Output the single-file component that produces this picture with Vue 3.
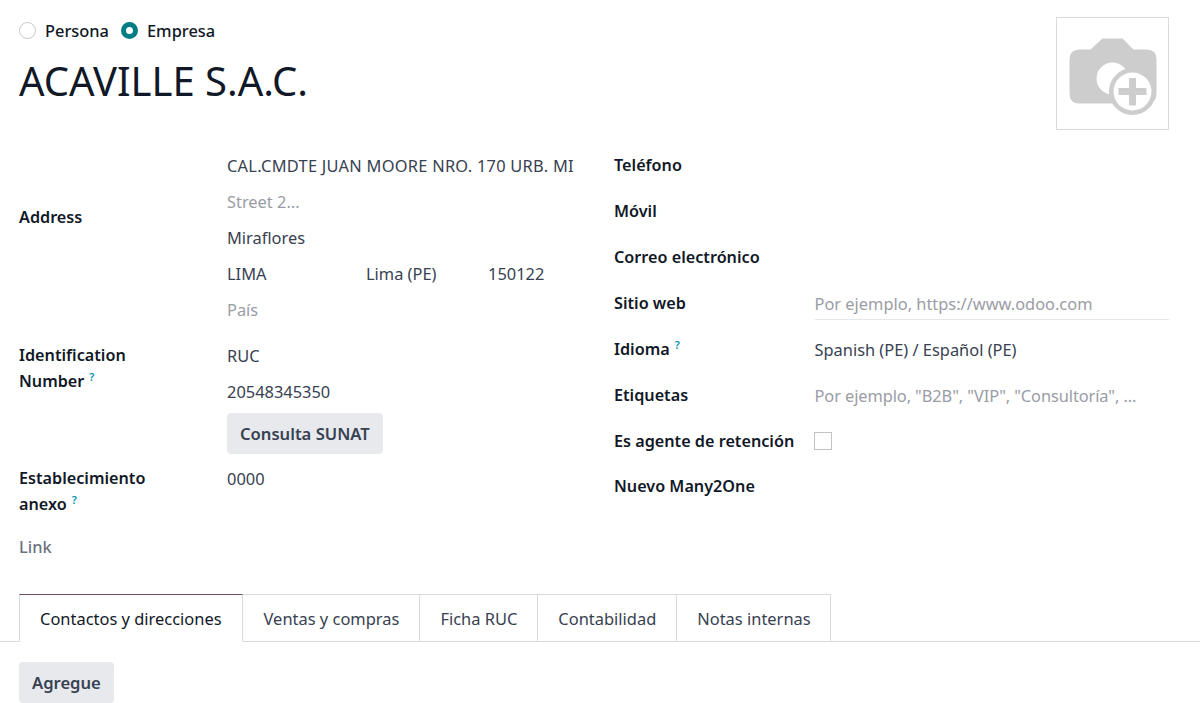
<script setup>
const tabs = ['Contactos y direcciones', 'Ventas y compras', 'Ficha RUC', 'Contabilidad', 'Notas internas']
const rightRows = [
  { label: 'Teléfono' },
  { label: 'Móvil' },
  { label: 'Correo electrónico' },
  { label: 'Sitio web', placeholder: 'Por ejemplo, https://www.odoo.com', underline: true },
  { label: 'Idioma', help: true, value: 'Spanish (PE) / Español (PE)' },
  { label: 'Etiquetas', placeholder: 'Por ejemplo, "B2B", "VIP", "Consultoría", ...', tight: true },
  { label: 'Es agente de retención', check: true },
  { label: 'Nuevo Many2One' },
]
</script>

<template>
  <div class="page">
    <header class="head">
      <div class="head-left">
        <div class="radios">
          <label class="radio"><span class="dot"></span>Persona</label>
          <label class="radio"><span class="dot on"></span>Empresa</label>
        </div>
        <h1 class="title">ACAVILLE S.A.C.</h1>
      </div>
      <div class="avatar">
        <svg class="cam" width="88" height="80" viewBox="0 0 88 80">
          <path fill="#cdcdcd" d="M10.500 13.500H21.500L33.500 2.500H53.500L64.500 13.500H77.500Q87.500 13.500 87.500 23.500V57.500Q87.500 67.500 77.500 67.500H10.500Q.5 67.500 .5 57.500V23.500Q.5 13.500 10.500 13.500Z"/>
          <circle cx="43.500" cy="42.500" r="16" fill="#fff"/>
          <circle cx="63.500" cy="55.500" r="23.500" fill="#cdcdcd"/>
          <circle cx="63.500" cy="55.500" r="19" fill="#fff"/>
          <path fill="#cdcdcd" d="M60 42h7v10h10.500v7H67v10.500h-7V59H49.500v-7H60z"/>
        </svg>
      </div>
    </header>

    <div class="cols">
      <section class="col-left">
        <div class="group address">
          <div class="lab addr-lab">Address</div>
          <div class="vals">
            <div class="line caps">CAL.CMDTE JUAN MOORE NRO. 170 URB. MI</div>
            <div class="line ph">Street 2...</div>
            <div class="line">Miraflores</div>
            <div class="line triple"><span>LIMA</span><span>Lima (PE)</span><span>150122</span></div>
            <div class="line ph">País</div>
          </div>
        </div>
        <div class="group ident">
          <div class="lab">Identification<br>Number<sup class="help">?</sup></div>
          <div class="vals">
            <div class="line">RUC</div>
            <div class="line">20548345350</div>
            <button class="btn sunat">Consulta SUNAT</button>
          </div>
        </div>
        <div class="group estab">
          <div class="lab">Establecimiento<br>anexo<sup class="help">?</sup></div>
          <div class="val-one">0000</div>
        </div>
        <div class="link">Link</div>
      </section>

      <section class="col-right">
        <div v-for="r in rightRows" :key="r.label" class="rrow" :class="{ short: r.check }">
          <div class="lab rlab">{{ r.label }}<sup v-if="r.help" class="help">?</sup></div>
          <div class="rval" :class="{ under: r.underline }">
            <span v-if="r.placeholder" class="ph" :class="{ tight: r.tight }">{{ r.placeholder }}</span>
            <span v-else-if="r.value">{{ r.value }}</span>
            <span v-else-if="r.check" class="check"></span>
          </div>
        </div>
      </section>
    </div>

    <nav class="tabs">
      <div v-for="(t, i) in tabs" :key="t" class="tab" :class="{ active: i === 0 }">{{ t }}</div>
    </nav>
    <div class="tabpane">
      <button class="btn">Agregue</button>
    </div>
  </div>
</template>

<style>
html, body { margin: 0; background: #fff; overflow: hidden; }
</style>

<style scoped>
.page {
  width: 1200px;
  height: 703px;
  overflow: hidden;
  background: #fff;
  font-family: "Noto Sans", "Open Sans", sans-serif;
  font-size: 16.400px;
  color: #374151;
  box-sizing: border-box;
}
.head {
  display: flex;
  justify-content: space-between;
  padding: 17px 31px 0 19px;
  height: 131px;
  box-sizing: border-box;
}
.radios { display: flex; gap: 12px; height: 27px; align-items: center; }
.radio { display: flex; align-items: center; gap: 9px; color: #111827; font-weight: 500; }
.dot {
  width: 17px; height: 17px; border-radius: 50%;
  border: 1px solid #c4c7cc; box-sizing: border-box; background: #fff;
}
.dot.on { border: 5px solid #017e84; }
.title {
  margin: 11px 0 0;
  font-size: 40px;
  line-height: 52px;
  font-weight: 400;
  color: #111827;
}
.avatar {
  width: 113px; height: 113px;
  box-sizing: border-box;
  border: 1px solid #d8dadd;
  display: flex; align-items: flex-start; justify-content: center;
  padding-top: 18px;
}
.cam { display: block; }
.cols { display: flex; padding: 17px 31px 0 19px; height: 463px; box-sizing: border-box; }
.col-left { width: 595px; flex: none; }
.col-right { flex: 1; padding-top: 2px; }
.lab { font-weight: 600; color: #111827; line-height: 26px; width: 208px; flex: none; font-size: 16.200px; }
.group { display: flex; }
.address .addr-lab { padding-top: 56px; }
.vals { flex: 1; }
.line { height: 36px; line-height: 36px; white-space: nowrap; }
.caps { letter-spacing: 0.260px; }
.triple { display: flex; }
.triple span:nth-child(1) { width: 139px; }
.triple span:nth-child(2) { width: 122px; }
.ph { color: #9a9ca5; }
.tight { letter-spacing: -0.090px; }
.ident { margin-top: 10px; }
.ident .lab { padding-top: 4px; }
.btn {
  display: block;
  font: inherit;
  font-weight: 600;
  color: #374151;
  background: #e7e9ed;
  border: 0;
  border-radius: 4px;
  height: 41px;
  padding: 0 13px;
  font-size: 16.600px;
}
.sunat { margin-top: 3px; }
.estab { margin-top: 11px; }
.val-one { line-height: 28px; }
.link { margin-top: 17px; font-weight: 500; color: #6b7280; line-height: 26px; font-size: 16.400px; }
.rrow { display: flex; height: 46px; }
.rrow.short { height: 45px; }
.rlab { width: 200.500px; line-height: 30px; white-space: nowrap; }
.rval { flex: 1; height: 30px; line-height: 32px; white-space: nowrap; }
.under { border-bottom: 1px solid #e5e7eb; height: 31px; }
.check {
  display: inline-block; width: 18px; height: 18px;
  border: 1px solid #bfc2c7; box-sizing: border-box;
  margin-top: 6px; margin-left: -1px; vertical-align: top;
}
.help { font-size: 11px; font-weight: 600; margin-left: 5px; line-height: 0; color: #0891b2; }
.tabs {
  display: flex;
  padding-left: 19px;
  height: 48px;
  box-sizing: border-box;
  border-bottom: 1px solid #d8dadd;
  font-size: 16.450px;
}
.tab {
  height: 48px;
  box-sizing: border-box;
  padding: 0 20px;
  line-height: 48px;
  border: 1px solid #d8dadd;
  border-left-width: 0;
  background: #fff;
  white-space: nowrap;
}
.tab:nth-child(2) { padding-left: 21px; }
.tab:nth-child(5) { padding-right: 19px; }
.tab.active {
  border-top: 1px solid #714b67;
  border-left: 1px solid #d8dadd;
  border-bottom-color: #fff;
  color: #111827;
}
.tabpane { padding: 20px 19px 0; }
</style>
